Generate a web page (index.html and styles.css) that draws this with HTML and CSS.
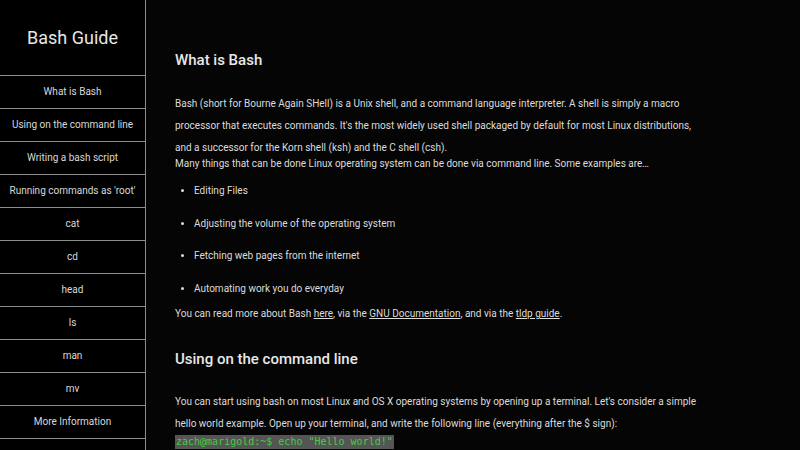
FILE: index.html
```html
<!DOCTYPE html>
<html lang="en">
<head>
<meta charset="utf-8">
<title>Bash Guide</title>
<link rel="stylesheet" href="styles.css">
</head>
<body>
<nav class="sidebar">
  <header class="brand">Bash Guide</header>
  <a class="nav-link" href="#what">What is Bash</a>
  <a class="nav-link" href="#using">Using on the command line</a>
  <a class="nav-link" href="#script">Writing a bash script</a>
  <a class="nav-link" href="#root">Running commands as 'root'</a>
  <a class="nav-link" href="#cat">cat</a>
  <a class="nav-link" href="#cd">cd</a>
  <a class="nav-link" href="#head">head</a>
  <a class="nav-link" href="#ls">ls</a>
  <a class="nav-link" href="#man">man</a>
  <a class="nav-link" href="#mv">mv</a>
  <a class="nav-link last" href="#more">More Information</a>
</nav>
<main class="content">
  <section class="section" id="what">
    <h2 class="section-title first">What is Bash</h2>
    <p class="para">Bash (short for Bourne Again SHell) is a Unix shell, and a command language interpreter. A shell is simply a macro processor that executes commands. It's the most widely used shell packaged by default for most Linux distributions, and a successor for the Korn shell (ksh) and the C shell (csh).</p>
    <p class="para tight">Many things that can be done Linux operating system can be done via command line. Some examples are…</p>
    <ul class="examples">
      <li>Editing Files</li>
      <li>Adjusting the volume of the operating system</li>
      <li>Fetching web pages from the internet</li>
      <li>Automating work you do everyday</li>
    </ul>
    <p class="para short">You can read more about Bash <a href="#">here</a>, via the <a href="#">GNU Documentation</a>, and via the <a href="#">tldp guide</a>.</p>
  </section>
  <section class="section" id="using">
    <h2 class="section-title">Using on the command line</h2>
    <p class="para">You can start using bash on most Linux and OS X operating systems by opening up a terminal. Let's consider a simple hello world example. Open up your terminal, and write the following line (everything after the $ sign):</p>
    <code class="term">zach@marigold:~$ echo "Hello world!"</code>
  </section>
</main>
</body>
</html>
```
FILE: styles.css
```css
* { box-sizing: border-box; }
html, body { height: 100%; }
body {
  margin: 0;
  display: flex;
  background: #000;
  color: #dcdcdc;
  font-family: Roboto, "Noto Sans", sans-serif;
  overflow: hidden;
}
.sidebar {
  flex: 0 0 146px;
  width: 146px;
  border-right: 1px solid #8c8c8c;
  min-height: 100vh;
  display: flex;
  flex-direction: column;
}
.brand {
  height: 75px;
  display: flex;
  align-items: center;
  justify-content: center;
  font-size: 18px;
  color: #e6e6e6;
}
.nav-link {
  display: block;
  height: 33px;
  line-height: 32px;
  border-top: 1px solid #8c8c8c;
  text-align: center;
  font-size: 10px;
  color: #d8d8d8;
  text-decoration: none;
  white-space: nowrap;
}
.nav-link.last { border-bottom: 1px solid #8c8c8c; height: 34px; }
.content {
  flex: 1;
  padding: 0 95px 0 29px;
  background: #050505;
  font-size: 10px;
}
.section-title {
  margin: 26px 0 22px;
  font-size: 15px;
  line-height: 20px;
  font-weight: 500;
  color: #e8e8e8;
}
.section-title.first { margin-top: 50px; margin-bottom: 23px; }
.para {
  margin: 0;
  line-height: 22px;
}
.para.tight { margin-top: -6px; }
.para.short { line-height: 18px; }
.para a { color: #dcdcdc; }
.examples {
  margin: 0;
  padding-left: 19px;
}
.examples li { line-height: 32.5px; }
.term {
  display: inline-block;
  background: #555;
  color: #3fcf3f;
  font-family: "DejaVu Sans Mono", monospace;
  font-size: 10px;
  line-height: 14px;
  padding: 0 1px;
}
```
